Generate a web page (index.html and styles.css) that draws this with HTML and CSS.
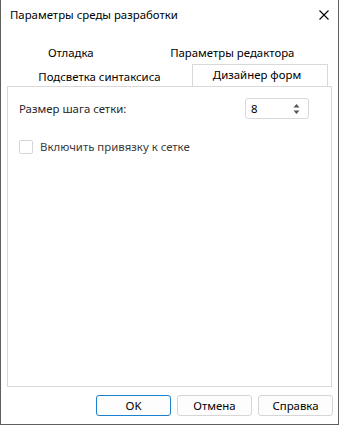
FILE: index.html
```html
<!DOCTYPE html>
<html lang="ru">
<head>
  <meta charset="UTF-8">
  <title>Параметры среды разработки</title>
  <link rel="stylesheet" href="styles.css">
</head>
<body>
  <div class="window">
    <div class="titlebar">
      <span class="title">Параметры среды разработки</span>
      <svg class="close" width="10" height="10" viewBox="0 0 10 10">
        <path d="M0.5 0.5 L9.5 9.5 M9.5 0.5 L0.5 9.5" stroke="#000" stroke-width="1.1" fill="none"/>
      </svg>
    </div>

    <div class="tabs">
      <div class="tab-row row-back">
        <div class="tab tab-debug">Отладка</div>
        <div class="tab tab-editor">Параметры редактора</div>
      </div>
      <div class="tab-row row-front">
        <div class="tab tab-syntax">Подсветка синтаксиса</div>
        <div class="tab tab-designer active">Дизайнер форм</div>
      </div>
    </div>

    <div class="panel">
      <div class="field">
        <label for="gridStep">Размер шага сетки:</label>
        <div class="spin">
          <span class="spin-value" id="gridStep">8</span>
          <svg class="spin-arrows" width="7" height="12" viewBox="0 0 7 12">
            <path d="M3.5 1 L6.5 4.5 L0.5 4.5 Z" fill="#555"/>
            <path d="M3.5 11 L6.5 7.5 L0.5 7.5 Z" fill="#555"/>
          </svg>
        </div>
      </div>
      <div class="check">
        <span class="box"></span>
        <span class="check-label">Включить привязку к сетке</span>
      </div>
    </div>

    <div class="buttons">
      <button class="btn default">OK</button>
      <button class="btn">Отмена</button>
      <button class="btn">Справка</button>
    </div>
  </div>
</body>
</html>
```

FILE: styles.css
```css
body {
  margin: 0;
  background: #fff;
  font-family: "Noto Sans", "Open Sans", sans-serif;
  font-size: 11.4px;
  color: #000;
}
.window {
  width: 337px;
  height: 424px;
  border: 1px solid #60605a;
  border-top: none;
  background: #fff;
  display: flex;
  flex-direction: column;
}
.titlebar {
  height: 32px;
  display: flex;
  align-items: center;
  justify-content: space-between;
  padding: 0 9px 2px 9px;
  box-sizing: border-box;
}
.title {
  line-height: 16px;
}
.close {
  display: block;
}
.tabs {
  padding: 10px 6px 0 6px;
}
.tab-row {
  display: flex;
}
.tab {
  text-align: center;
  line-height: 18px;
}
.row-back {
  height: 22px;
}
.row-back .tab {
  line-height: 22px;
}
.tab-debug {
  width: 124px;
  margin-left: 2px;
}
.tab-editor {
  width: 200px;
}
.row-front {
  height: 22px;
}
.row-front .tab {
  line-height: 22px;
}
.tab-syntax {
  width: 185px;
  padding-top: 2px;
}
.tab-designer {
  width: 136px;
  padding-right: 6px;
  box-sizing: border-box;
}
.tab.active {
  border: 1px solid #d9d9d9;
  border-bottom: none;
  background: #fff;
  height: 22px;
  line-height: 20px;
  position: relative;
  z-index: 1;
  margin-bottom: -1px;
}
.panel {
  margin: 0 6px 0 6px;
  height: 301px;
  border: 1px solid #d9d9d9;
  padding: 11px 0 0 11px;
  box-sizing: border-box;
  color: #262626;
}
.field {
  display: flex;
  align-items: center;
  justify-content: space-between;
  padding-right: 22px;
}
.spin {
  width: 64px;
  height: 21px;
  box-sizing: border-box;
  border: 1px solid #dadada;
  border-radius: 3px;
  display: flex;
  align-items: center;
  justify-content: space-between;
  padding: 0 8px 0 5px;
  color: #000;
}
.spin-arrows {
  display: block;
}
.check {
  display: flex;
  align-items: center;
  margin-top: 20px;
}
.box {
  width: 12px;
  height: 12px;
  border: 1px solid #d6d6d6;
  border-radius: 2px;
  margin-right: 7px;
}
.check-label {
  color: #3a3a3a;
}
.buttons {
  display: flex;
  justify-content: flex-end;
  gap: 6px;
  padding: 8px 5px 0 0;
}
.btn {
  width: 75px;
  height: 21px;
  font-family: inherit;
  font-size: 11.4px;
  background: #fdfdfd;
  border: 1px solid #d6d6d6;
  border-radius: 3px;
  color: #000;
  padding: 0;
}
.btn.default {
  border-color: #1a82d0;
}
```
